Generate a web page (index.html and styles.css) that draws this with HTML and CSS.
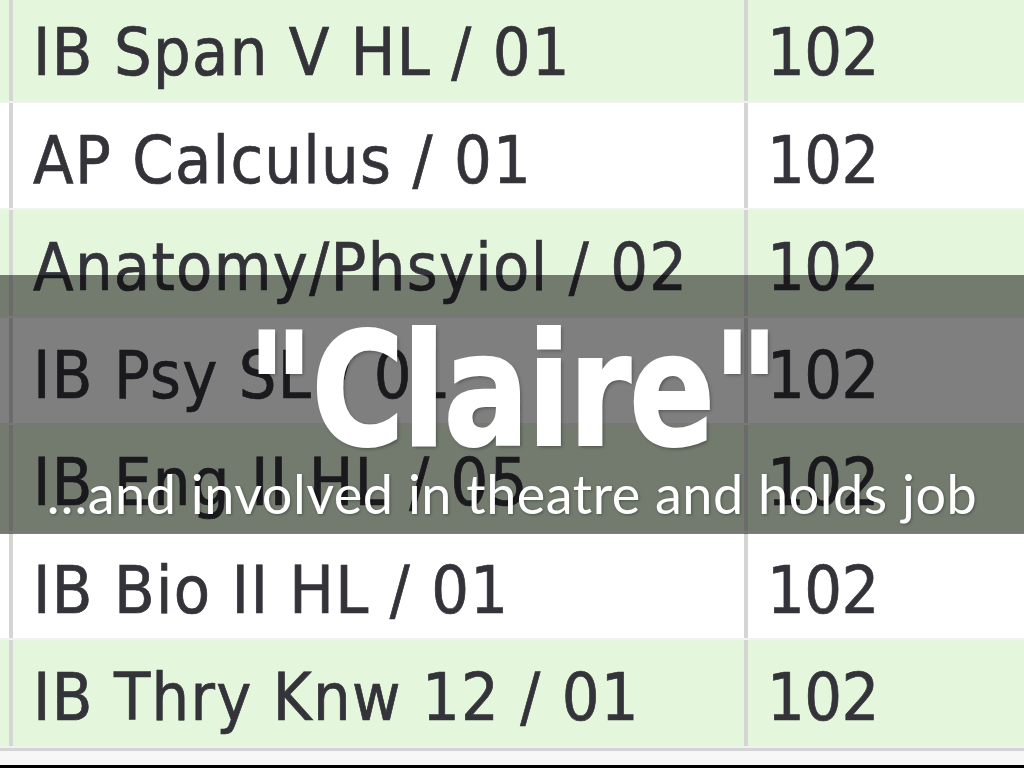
FILE: index.html
```html
<!DOCTYPE html>
<html>
<head>
<meta charset="utf-8">
<link rel="stylesheet" href="styles.css">
</head>
<body>
<div class="slide">
  <div class="table">
    <div class="row green"><div class="cell course">IB Span V HL / 01</div><div class="cell room">102</div></div>
    <div class="row white"><div class="cell course">AP Calculus / 01</div><div class="cell room">102</div></div>
    <div class="row green"><div class="cell course">Anatomy/Phsyiol / 02</div><div class="cell room">102</div></div>
    <div class="row white"><div class="cell course">IB Psy SL / 01</div><div class="cell room">102</div></div>
    <div class="row green"><div class="cell course">IB Eng II HL / 05</div><div class="cell room">102</div></div>
    <div class="row white"><div class="cell course">IB Bio II HL / 01</div><div class="cell room">102</div></div>
    <div class="row green"><div class="cell course">IB Thry Knw 12 / 01</div><div class="cell room">102</div></div>
  </div>
  <div class="table-foot"></div>
  <div class="black-strip"></div>
  <div class="overlay">
    <div class="title">"Claire"</div>
    <div class="subtitle">…and involved in theatre and holds job</div>
  </div>
</div>
</body>
</html>
```
FILE: styles.css
```css
html, body {
  margin: 0;
  padding: 0;
  background: #ffffff;
  overflow: hidden;
}
.slide {
  position: relative;
  width: 1024px;
  height: 768px;
  overflow: hidden;
}
.table {
  margin-top: -5px;
}
.row {
  display: flex;
  height: 107.5px;
  padding-left: 9px;
  box-sizing: border-box;
  border-bottom: 2px solid #f0f2ef;
}
.green { background: #e4f6dc; }
.white { background: #ffffff; }
.cell {
  border-left: 4px solid #d5d6d4;
  box-sizing: border-box;
  font-family: "DejaVu Sans Condensed", "DejaVu Sans", sans-serif;
  font-size: 66px;
  line-height: 107.5px;
  padding-top: 4px;
  color: #34333a;
  white-space: nowrap;
  -webkit-text-stroke: 0.7px #34333a;
}
.course {
  width: 735px;
  padding-left: 20px;
  letter-spacing: 1.3px;
}
.room {
  flex: 1;
  padding-left: 19px;
  letter-spacing: -0.5px;
}
.table-foot {
  height: 14px;
  border-top: 3px solid #d3d4d3;
  background: #f7f7f7;
}
.black-strip {
  height: 10px;
  background: #000;
}
.overlay {
  position: absolute;
  left: 0;
  top: 275px;
  width: 1024px;
  height: 259px;
  background: rgba(0, 0, 0, 0.5);
  display: flex;
  flex-direction: column;
  align-items: center;
  color: #ffffff;
}
.title {
  font-family: "Liberation Sans Narrow", "DejaVu Sans Condensed", sans-serif;
  font-weight: 700;
  font-size: 156px;
  line-height: 156px;
  margin-top: 38px;
  letter-spacing: -2px;
  transform: scaleX(0.9);
  -webkit-text-stroke: 2px #ffffff;
  text-shadow: 2px 2px 4px rgba(0, 0, 0, 0.35);
}
.subtitle {
  font-family: Lato, "Open Sans", sans-serif;
  font-size: 54px;
  line-height: 60px;
  letter-spacing: 0.5px;
  margin-top: -5px;
  text-shadow: 1px 1px 3px rgba(0, 0, 0, 0.3);
}
```
